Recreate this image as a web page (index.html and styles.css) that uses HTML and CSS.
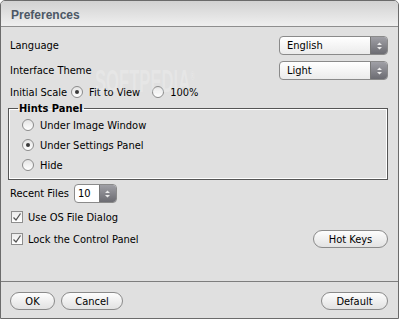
FILE: index.html
```html
<!DOCTYPE html>
<html lang="en">

<head>
  <meta charset="UTF-8">
  <meta name="viewport" content="width=device-width, initial-scale=1.0">
  <title>Preferences</title>
  <link rel="stylesheet" href="styles.css">
</head>

<body>
  <div class="window">
    <div class="titlebar">Preferences</div>

    <div class="content">
      <div class="row">
        <span>Language</span>
        <div class="select">
          <span class="select-value">English</span>
          <span class="arrows">
            <svg width="7" height="10" viewBox="0 0 7 10"><path d="M3.5 1.5 6 4H1z M1 6h5L3.5 8.5z" fill="#ececec"/></svg>
          </span>
        </div>
      </div>
      <div class="row">
        <span>Interface Theme</span>
        <div class="select">
          <span class="select-value">Light</span>
          <span class="arrows">
            <svg width="7" height="10" viewBox="0 0 7 10"><path d="M3.5 1.5 6 4H1z M1 6h5L3.5 8.5z" fill="#ececec"/></svg>
          </span>
        </div>
      </div>

      <div class="scale-row">
        <span class="scale-label">Initial Scale</span>
        <span class="choice"><span class="radio on"></span>Fit to View</span>
        <span class="choice second"><span class="radio"></span>100%</span>
      </div>

      <fieldset class="hints">
        <legend>Hints Panel</legend>
        <div class="option"><span class="radio"></span>Under Image Window</div>
        <div class="option"><span class="radio on"></span>Under Settings Panel</div>
        <div class="option"><span class="radio"></span>Hide</div>
      </fieldset>

      <div class="recent-row">
        <span>Recent Files</span>
        <div class="spin">
          <span class="spin-value">10</span>
          <span class="arrows">
            <svg width="7" height="10" viewBox="0 0 7 10"><path d="M3.5 1.5 6 4H1z M1 6h5L3.5 8.5z" fill="#ececec"/></svg>
          </span>
        </div>
      </div>

      <div class="check-row">
        <span class="check"><svg width="10" height="10" viewBox="0 0 10 10"><path d="M1.5 5.5 4 8 8.5 1.5" fill="none" stroke="#555" stroke-width="1.3"/></svg></span>
        Use OS File Dialog
      </div>
      <div class="check-row lock-row">
        <span class="check"><svg width="10" height="10" viewBox="0 0 10 10"><path d="M1.5 5.5 4 8 8.5 1.5" fill="none" stroke="#555" stroke-width="1.3"/></svg></span>
        Lock the Control Panel
        <button class="btn hotkeys">Hot Keys</button>
      </div>
    </div>

    <div class="footer">
      <button class="btn ok">OK</button>
      <button class="btn cancel">Cancel</button>
      <button class="btn default">Default</button>
    </div>

    <div class="watermark">SOFTPEDIA<sup>®</sup></div>
  </div>
</body>

</html>
```

FILE: styles.css
```css
body {
  margin: 0;
  font: 11px "DejaVu Sans Condensed", "DejaVu Sans", sans-serif;
  font-stretch: condensed;
  color: #000;
}

.window {
  position: relative;
  width: 399px;
  height: 319px;
  box-sizing: border-box;
  border: 1px solid #6b6b6b;
  border-radius: 5px 5px 0 0;
  background: #e0e0e0;
  display: flex;
  flex-direction: column;
  overflow: hidden;
}

.titlebar {
  height: 25px;
  flex: none;
  border-bottom: 1px solid #8e8e8e;
  background: linear-gradient(#d2d2d2, #efefef);
  padding-left: 10px;
  font: bold 12px "Liberation Sans", Arial, sans-serif;
  line-height: 28px;
  color: #4c5866;
}

.content {
  padding: 9px 10px 0 9px;
  display: flex;
  flex-direction: column;
}

.row {
  display: flex;
  align-items: center;
  justify-content: space-between;
  height: 19px;
}

.row + .row {
  margin-top: 6px;
}

/* dropdowns and spin box */
.select,
.spin {
  display: flex;
  height: 19px;
  box-sizing: border-box;
  border: 1px solid #8a8a8a;
  border-radius: 4px;
  overflow: hidden;
}

.select {
  width: 109px;
  background: linear-gradient(#ffffff, #ebebeb);
}

.select-value {
  flex: 1;
  padding-left: 7px;
  line-height: 17px;
}

.arrows {
  width: 16px;
  border-left: 1px solid #777;
  background: linear-gradient(#a0a0a6, #6c6c72);
  display: flex;
  align-items: center;
  justify-content: center;
}

.spin {
  width: 43px;
  margin-left: 5px;
  background: #fff;
}

.spin-value {
  flex: 1;
  padding-left: 3px;
  line-height: 17px;
}

/* radio buttons */
.radio {
  width: 12px;
  height: 12px;
  flex: none;
  box-sizing: border-box;
  border: 1px solid #8c8c8c;
  border-radius: 50%;
  background: linear-gradient(#e4e4e4, #ffffff);
  display: inline-flex;
  align-items: center;
  justify-content: center;
}

.radio.on::after {
  content: "";
  width: 4px;
  height: 4px;
  border-radius: 50%;
  background: #3a3a3a;
}

.scale-row {
  display: flex;
  align-items: center;
  height: 16px;
  margin-top: 4px;
}

.scale-label {
  width: 61px;
}

.choice {
  display: inline-flex;
  align-items: center;
  gap: 6px;
}

.choice.second {
  margin-left: 12px;
}

/* hints panel */
.hints {
  margin: 2px 0 0 -2px;
  padding: 0 0 4px 0;
  min-width: 0;
  border: 1px solid #555;
  box-shadow: inset 0 0 0 1px #fff;
}

.hints legend {
  margin-left: 9px;
  padding: 0 1px;
  font-weight: bold;
  line-height: 13px;
}

.option {
  display: flex;
  align-items: center;
  gap: 6px;
  height: 20px;
  padding-left: 13px;
}

.recent-row {
  display: flex;
  align-items: center;
  margin-top: 4px;
}

/* checkboxes */
.check-row {
  display: flex;
  align-items: center;
  gap: 5px;
  height: 16px;
  margin-top: 6px;
  padding-left: 1px;
}

.lock-row {
  height: 18px;
  margin-top: 5px;
}

.check {
  width: 12px;
  height: 12px;
  box-sizing: border-box;
  border: 1px solid #8e8e8e;
  background: linear-gradient(#ececec, #ffffff);
  display: inline-flex;
  align-items: center;
  justify-content: center;
}

/* pill buttons */
.btn {
  height: 18px;
  padding: 0;
  border: 1px solid #8a8a8a;
  border-radius: 9px;
  background: linear-gradient(#fdfdfd, #e2e2e2);
  font: inherit;
  color: #000;
}

.hotkeys {
  width: 75px;
  margin-left: auto;
}

.footer {
  margin-top: auto;
  border-top: 1px solid #7e7e7e;
  padding: 10px 10px 8px 9px;
  display: flex;
  gap: 6px;
}

.ok {
  width: 45px;
}

.cancel {
  width: 62px;
}

.default {
  width: 67px;
  margin-left: auto;
}

/* faint site watermark lying over the dialog */
.watermark {
  position: absolute;
  left: 94px;
  top: 62px;
  font: bold 32px "Liberation Sans", Arial, sans-serif;
  color: rgba(255, 255, 255, 0.22);
  transform: scaleX(0.52);
  transform-origin: left top;
  pointer-events: none;
}

.watermark sup {
  font-size: 12px;
}
```
